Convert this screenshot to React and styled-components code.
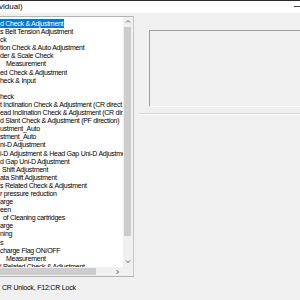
import React from "react";
import styled, { createGlobalStyle } from "styled-components";

const Global = createGlobalStyle`
  html, body { margin: 0; padding: 0; }
  body {
    width: 300px; height: 300px; overflow: hidden;
    background: #f0f0f0;
    font-family: "Liberation Sans", Arial, sans-serif;
  }
`;

const Window = styled.div`
  width: 300px; height: 300px; display: flex; flex-direction: column;
  background: #f0f0f0; overflow: hidden;
`;

const TitleBar = styled.div`
  height: 12px; flex: none; background: #fff; border-top: 1px solid #2b2b2b;
  display: flex; align-items: center; justify-content: space-between;
  font-size: 8px; color: #000; white-space: nowrap;
`;

const TitleText = styled.span`
  margin-left: -1px; line-height: 12px;
`;

const MinBtn = styled.span`
  width: 6px; height: 1px; background: #444; margin-bottom: 1px;
`;

const Main = styled.div`
  display: flex; padding-top: 3px; flex: none;
`;

const ListBox = styled.div`
  width: 133px; height: 259px; flex: none; background: #fff;
  border-top: 1px solid #b4b4b4; border-right: 1px solid #c8c8c8; border-bottom: 1px solid #b4b4b4;
  display: grid; grid-template-columns: 123px 10px; grid-template-rows: 250px 9px;
`;

const Rows = styled.div`
  padding-top: 2px; overflow: hidden;
`;

const Row = styled.div`
  height: 8.1px; line-height: 8px; font-size: 7px; white-space: nowrap; overflow: visible;
  color: ${p => (p.$sel ? "#fff" : "#000")};
`;

const RowText = styled.span`
  display: inline-block; height: 9px; line-height: 10px;
  padding-left: ${p => p.$indent || 0}px; padding-right: 1px;
  background: ${p => (p.$sel ? "#0078d7" : "transparent")};
  letter-spacing: -0.28px;
`;

const VScroll = styled.div`
  background: #f0f0f0; display: flex; flex-direction: column; align-items: center;
`;

const ArrowBox = styled.div`
  height: 10px; width: 100%; display: flex; align-items: center; justify-content: center; flex: none;
`;

const VThumb = styled.div`
  width: 7px; height: 209px; background: #cdcdcd; margin-left: -1px;
`;

const VSpace = styled.div`
  flex: 1;
`;

const HScroll = styled.div`
  background: #f0f0f0; display: flex; align-items: center;
`;

const HThumb = styled.div`
  width: 98px; height: 7px; background: #cdcdcd;
`;

const HArrow = styled.div`
  width: 10px; margin-left: 17px; display: flex; justify-content: center;
`;

const Corner = styled.div`
  background: #f0f0f0;
`;

const RightPane = styled.div`
  flex: 1; padding-left: 5px; padding-top: 14px; display: flex; flex-direction: column;
`;

const Frame = styled.div`
  margin-left: 10px; height: 75px;
  border-top: 1px solid #a0a0a0; border-left: 1px solid #a0a0a0; border-bottom: 1px solid #fff;
`;

const Separator = styled.div`
  margin-top: 6px; height: 1px; background: #d5d5d5; border-bottom: 1px solid #fff;
`;

const StatusBar = styled.div`
  padding-left: 2px; padding-top: 6px; font-size: 7px; line-height: 9px; letter-spacing: -0.2px;
  white-space: nowrap; color: #000;
`;

const Chevron = ({ dir }) => {
  const paths = {
    up: "M1 3.5 L3 1.5 L5 3.5",
    down: "M1 1.5 L3 3.5 L5 1.5",
    right: "M1.5 1 L3.5 3 L1.5 5",
  };
  return (
    <svg width="6" height="6" viewBox="0 0 6 6">
      <path d={paths[dir]} fill="none" stroke="#606060" strokeWidth="1" />
    </svg>
  );
};

const items = [
  ["d Check & Adjustment", 0],
  ["s Belt Tension Adjustment", 0],
  ["ck", 0],
  ["tion Check & Auto Adjustment", 0],
  ["der & Scale Check", 0],
  ["Measurement", 6],
  ["ed Check & Adjustment", 0],
  ["heck & Input", 0],
  ["", 0],
  ["heck", 0],
  ["t Inclination Check & Adjustment (CR direct", 0],
  ["ead Inclination Check &  Adjustment (CR dir", 0],
  ["d Slant Check & Adjustment (PF direction)", 0],
  ["ustment_Auto", 0],
  ["stment_Auto", 0],
  ["ni-D Adjustment", 0],
  ["i-D Adjustment & Head Gap Uni-D Adjustmen", 0],
  ["d Gap Uni-D Adjustment", 0],
  ["Shift Adjustment", 2],
  ["ata Shift Adjustment", 0],
  ["s Related Check & Adjustment", 0],
  ["r pressure reduction", 0],
  ["arge", 0],
  ["een", 0],
  ["of Cleaning cartridges", 3],
  ["arge", 0],
  ["ning", 0],
  ["s", 0],
  ["charge Flag ON/OFF", 0],
  ["Measurement", 6],
  ["l Related Check & Adjustment", 0],
];

export default function App() {
  return (
    <Window>
      <Global />
      <TitleBar>
        <TitleText>vidual)</TitleText>
        <MinBtn />
      </TitleBar>
      <Main>
        <ListBox>
          <Rows>
            {items.map(([t, ind], i) => (
              <Row key={i} $sel={i === 0}>
                <RowText $indent={ind} $sel={i === 0}>{t}</RowText>
              </Row>
            ))}
          </Rows>
          <VScroll>
            <ArrowBox><Chevron dir="up" /></ArrowBox>
            <VThumb />
            <VSpace />
            <ArrowBox><Chevron dir="down" /></ArrowBox>
          </VScroll>
          <HScroll>
            <HThumb />
            <HArrow><Chevron dir="right" /></HArrow>
          </HScroll>
          <Corner />
        </ListBox>
        <RightPane>
          <Frame />
          <Separator />
        </RightPane>
      </Main>
      <StatusBar>CR Unlock, F12:CR Lock</StatusBar>
    </Window>
  );
}
